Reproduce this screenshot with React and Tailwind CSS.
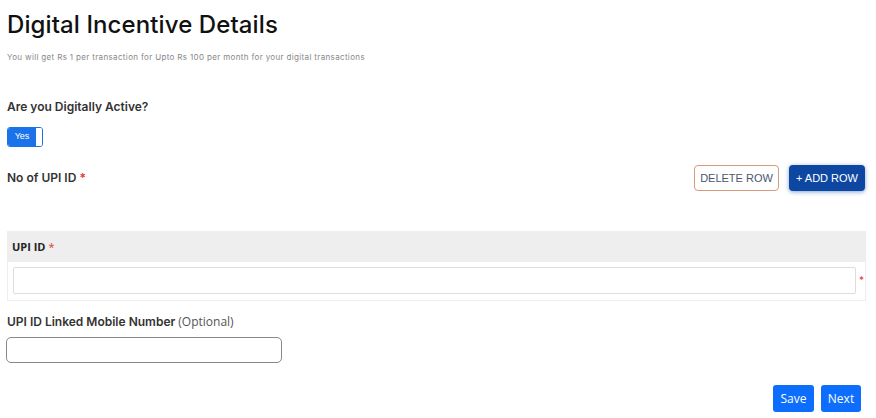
import React from "react";

const poppins = { fontFamily: "Inter, 'Open Sans', sans-serif" };

export default function App() {
  return (
    <div className="w-[876px] h-[418px] bg-white overflow-hidden px-[7px] relative" style={poppins}>
      <h1 className="pt-[11px] text-[24px] leading-[28px] font-medium text-[#111] tracking-[0.1px]">
        Digital Incentive Details
      </h1>
      <p className="mt-[13px] text-[8px] leading-[10px] text-[#888] tracking-[0.35px]">
        You will get Rs 1 per transaction for Upto Rs 100 per month for your digital transactions
      </p>

      <div className="mt-[37px] text-[12px] leading-[16px] font-semibold text-[#333]">
        Are you Digitally Active?
      </div>
      <div className="mt-[12px] flex">
        <div className="flex h-[20px] rounded-[3px] border border-[#1a73e8] overflow-hidden">
          <div className="w-[28px] bg-[#1a73e8] text-white text-[9px] flex items-center justify-center" style={{ fontFamily: "'Liberation Sans', sans-serif" }}>
            Yes
          </div>
          <div className="w-[6px] bg-white" />
        </div>
      </div>

      <div className="mt-[18px] flex items-center justify-between pr-[4px]">
        <div className="text-[12px] font-semibold text-[#333]">
          No of UPI ID <span className="text-[#e53935]">*</span>
        </div>
        <div className="flex gap-[10px]" style={{ fontFamily: "'Liberation Sans', Arial, sans-serif" }}>
          <button className="h-[26px] w-[85px] rounded-[4px] border border-[#d69a7c] bg-white text-[11px] text-[#4a5670]">
            DELETE ROW
          </button>
          <button className="h-[26px] w-[76px] rounded-[4px] bg-[#0d47a1] text-[11px] text-white shadow-[0_1px_4px_rgba(13,71,161,0.5)]">
            + ADD ROW
          </button>
        </div>
      </div>

      <div className="mt-[40px] mr-[3px] border border-[#eeeeee]">
        <div className="h-[30px] bg-[#eeeeee] flex items-center px-[4px] text-[11px] font-bold text-[#222]" style={{ fontFamily: "'Open Sans', sans-serif" }}>
          UPI ID <span className="ml-[3px] text-[#e53935] font-normal">*</span>
        </div>
        <div className="flex items-center pl-[5px] pr-[1px] pt-[5px] pb-[6px]">
          <input className="h-[27px] flex-1 border border-[#dddddd] rounded-[2px] outline-none" />
          <span className="ml-[3px] text-[#e53935] text-[10px]">*</span>
        </div>
      </div>

      <div className="mt-[12px] text-[12px] font-semibold text-[#333]">
        UPI ID Linked Mobile Number{" "}
        <span className="font-normal text-[#555]" style={{ fontFamily: "'Open Sans', sans-serif" }}>(Optional)</span>
      </div>
      <input className="mt-[6px] -ml-[1px] h-[26px] w-[276px] border border-[#888] rounded-[5px] outline-none" />

      <div className="mt-[22px] flex justify-end gap-[7px] pr-[8px]" style={{ fontFamily: "'Open Sans', sans-serif" }}>
        <button className="h-[27px] w-[41px] rounded-[3px] bg-[#0d6efd] text-white text-[12px]">Save</button>
        <button className="h-[27px] w-[40px] rounded-[3px] bg-[#0d6efd] text-white text-[12px]">Next</button>
      </div>
    </div>
  );
}
